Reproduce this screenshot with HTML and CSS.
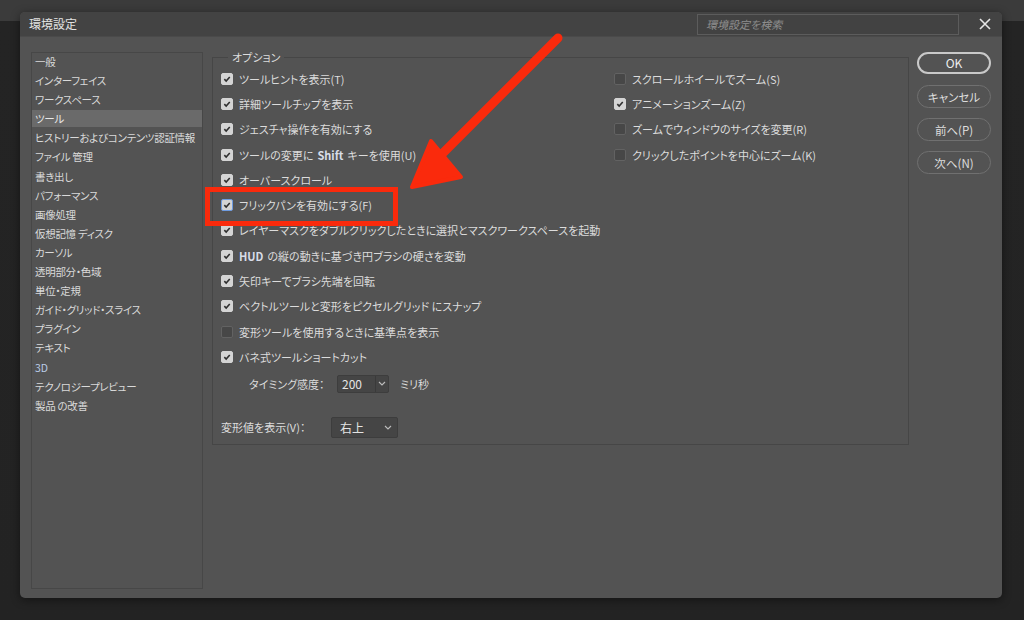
FILE: index.html
```html
<!DOCTYPE html>
<html lang="ja">
<head>
<meta charset="utf-8">
<title>環境設定</title>
<link rel="stylesheet" href="styles.css">
</head>
<body>
<div class="dialog">
  <div class="titlebar">
    <span class="title">環境設定</span>
    <div class="search">環境設定を検索</div>
    <svg class="close" width="12" height="12" viewBox="0 0 12 12"><path d="M1 1 L11 11 M11 1 L1 11" stroke="#e6e6e6" stroke-width="1.6" fill="none"/></svg>
  </div>
  <div class="dbody">
    <ul class="sidebar">
      <li>一般</li>
      <li>インターフェイス</li>
      <li>ワークスペース</li>
      <li class="sel">ツール</li>
      <li>ヒストリーおよびコンテンツ認証情報</li>
      <li>ファイル 管理</li>
      <li>書き出し</li>
      <li>パフォーマンス</li>
      <li>画像処理</li>
      <li>仮想記憶 ディスク</li>
      <li>カーソル</li>
      <li>透明部分・色域</li>
      <li>単位・定規</li>
      <li>ガイド・グリッド・スライス</li>
      <li>プラグイン</li>
      <li>テキスト</li>
      <li class="latin">3D</li>
      <li>テクノロジープレビュー</li>
      <li>製品 の改善</li>
    </ul>
    <div class="main">
      <fieldset class="group">
        <legend>オプション</legend>
        <div class="cols">
          <div class="col-left">
            <div class="opt"><span class="cb on"><svg viewBox="0 0 12 12"><path d="M2.8 6.2 L5 8.4 L9.3 3.7"/></svg></span>ツールヒントを表示(T)</div>
            <div class="opt"><span class="cb on"><svg viewBox="0 0 12 12"><path d="M2.8 6.2 L5 8.4 L9.3 3.7"/></svg></span>詳細ツールチップを表示</div>
            <div class="opt"><span class="cb on"><svg viewBox="0 0 12 12"><path d="M2.8 6.2 L5 8.4 L9.3 3.7"/></svg></span>ジェスチャ操作を有効にする</div>
            <div class="opt"><span class="cb on"><svg viewBox="0 0 12 12"><path d="M2.8 6.2 L5 8.4 L9.3 3.7"/></svg></span>ツールの変更に<span class="lat">Shift</span>キーを使用(U)</div>
            <div class="opt"><span class="cb on"><svg viewBox="0 0 12 12"><path d="M2.8 6.2 L5 8.4 L9.3 3.7"/></svg></span>オーバースクロール</div>
            <div class="opt"><span class="cb on focus"><svg viewBox="0 0 12 12"><path d="M2.8 6.2 L5 8.4 L9.3 3.7"/></svg></span>フリックパンを有効にする(F)</div>
            <div class="opt"><span class="cb on"><svg viewBox="0 0 12 12"><path d="M2.8 6.2 L5 8.4 L9.3 3.7"/></svg></span>レイヤーマスクをダブルクリックしたときに選択とマスクワークスペースを起動</div>
            <div class="opt"><span class="cb on"><svg viewBox="0 0 12 12"><path d="M2.8 6.2 L5 8.4 L9.3 3.7"/></svg></span><span class="lat first">HUD</span>の縦の動きに基づき円ブラシの硬さを変動</div>
            <div class="opt"><span class="cb on"><svg viewBox="0 0 12 12"><path d="M2.8 6.2 L5 8.4 L9.3 3.7"/></svg></span>矢印キーでブラシ先端を回転</div>
            <div class="opt"><span class="cb on"><svg viewBox="0 0 12 12"><path d="M2.8 6.2 L5 8.4 L9.3 3.7"/></svg></span>ベクトルツールと変形をピクセルグリッド にスナップ</div>
            <div class="opt"><span class="cb"></span>変形ツールを使用するときに基準点を表示</div>
            <div class="opt"><span class="cb on"><svg viewBox="0 0 12 12"><path d="M2.8 6.2 L5 8.4 L9.3 3.7"/></svg></span>バネ式ツールショートカット</div>
            <div class="timing">
              <span class="tlabel">タイミング感度：</span>
              <div class="select small">
                <span class="val">200</span>
                <span class="drop"><svg width="8" height="5" viewBox="0 0 8 5"><path d="M1 1 L4 4 L7 1" stroke="#bdbdbd" stroke-width="1.1" fill="none"/></svg></span>
              </div>
              <span class="unit">ミリ秒</span>
            </div>
          </div>
          <div class="col-right">
            <div class="opt"><span class="cb"></span>スクロールホイールでズーム(S)</div>
            <div class="opt"><span class="cb on"><svg viewBox="0 0 12 12"><path d="M2.8 6.2 L5 8.4 L9.3 3.7"/></svg></span>アニメーションズーム(Z)</div>
            <div class="opt"><span class="cb"></span>ズームでウィンドウのサイズを変更(R)</div>
            <div class="opt"><span class="cb"></span>クリックしたポイントを中心にズーム(K)</div>
          </div>
        </div>
        <div class="xform">
          <span class="xlabel">変形値を表示(V)：</span>
          <div class="select wide">
            <span class="val">右上</span>
            <svg width="8" height="5" viewBox="0 0 8 5"><path d="M1 1 L4 4 L7 1" stroke="#bdbdbd" stroke-width="1.1" fill="none"/></svg>
          </div>
        </div>
      </fieldset>
    </div>
    <div class="buttons">
      <button class="btn primary">OK</button>
      <button class="btn">キャンセル</button>
      <button class="btn">前へ(P)</button>
      <button class="btn">次へ(N)</button>
    </div>
  </div>
</div>
<svg class="annot" width="1024" height="620" viewBox="0 0 1024 620">
  <line x1="558" y1="38" x2="442" y2="154" stroke="#fa2a0c" stroke-width="9" stroke-linecap="round"/>
  <polygon points="431,141 461,177 412,187" fill="#fa2a0c" stroke="#fa2a0c" stroke-width="4" stroke-linejoin="round"/>
  <rect x="207.5" y="189.5" width="188" height="34" fill="none" stroke="#fa2a0c" stroke-width="5"/>
</svg>
</body>
</html>
```
FILE: styles.css
```css
* { box-sizing: border-box; }
html, body { margin: 0; padding: 0; }
body {
  width: 1024px;
  height: 620px;
  overflow: hidden;
  background: linear-gradient(#3b3b3b 0, #3b3b3b 21px, #242424 21px, #232323 100%);
  font-family: "Noto Sans CJK JP", "Noto Sans", sans-serif;
  font-size: 11px;
  font-feature-settings: "palt";
  color: #dcdcdc;
  position: relative;
  padding-top: 12px;
  padding-left: 20px;
}
.dialog {
  width: 982px;
  height: 586px;
  background: #535353;
  border-radius: 5px;
  box-shadow: 0 2px 10px rgba(0,0,0,0.45);
  overflow: hidden;
  display: flex;
  flex-direction: column;
}
.titlebar {
  height: 25px;
  background: #434343;
  border-bottom: 1px solid #4a4a4a;
  display: flex;
  align-items: center;
  padding-left: 9px;
  padding-right: 11px;
  flex: none;
}
.title {
  font-size: 12px;
  color: #e2e2e2;
  line-height: 14px;
}
.search {
  margin-left: auto;
  width: 262px;
  height: 21px;
  border: 1px solid #5c5c5c;
  background: #424242;
  color: #8e8e8e;
  font-style: italic;
  font-size: 11px;
  line-height: 19px;
  padding-left: 8px;
}
.close { margin-left: 20px; flex: none; }
.dbody {
  flex: 1;
  display: flex;
  padding: 13px 11px 9px 11px;
}
.sidebar {
  list-style: none;
  margin: 2px 0 0 0;
  padding: 0;
  width: 172px;
  border: 1px solid #474747;
  flex: none;
  display: flex;
  flex-direction: column;
  gap: 2px;
  font-size: 10.5px;
  letter-spacing: -0.3px;
}
.sidebar li {
  height: 17.1px;
  line-height: 17px;
  padding-left: 3px;
  white-space: nowrap;
  color: #dadada;
}
.sidebar li.sel { background: #6a6a6a; color: #e8e8e8; }
.sidebar li.latin { color: #b9cbe6; letter-spacing: 0; }
.main {
  width: 697px;
  margin-left: 9px;
  flex: none;
}
.group {
  margin: 0;
  padding: 2px 8px 4px 8px;
  border: 1px solid #464646;
  min-width: 0;
  height: 395px;
}
.group legend {
  padding: 0 4px;
  margin-left: 7px;
  line-height: 14px;
  color: #dcdcdc;
}
.cols { display: flex; }
.col-left { width: 393px; flex: none; }
.col-right { flex: 1; }
.opt {
  height: 25.3px;
  display: flex;
  align-items: center;
  white-space: nowrap;
  color: #dcdcdc;
}
.lat { font-weight: 600; color: #d8dde8; margin: 0 4px; }
.lat.first { margin-left: 0; }
.cb {
  width: 12px;
  height: 12px;
  border-radius: 2px;
  background: #474747;
  border: 1px solid #626262;
  margin-right: 6px;
  flex: none;
  display: flex;
}
.cb.on {
  background: #d4d4d4;
  border-color: #d4d4d4;
}
.cb.on.focus { border-color: #6e9be0; }
.cb svg { width: 10px; height: 10px; }
.cb svg path { stroke: #2f2f2f; stroke-width: 1.9; fill: none; }
.timing {
  height: 28px;
  display: flex;
  align-items: center;
  padding-left: 28px;
}
.tlabel { width: 88px; white-space: nowrap; }
.select {
  display: flex;
  align-items: center;
  background: #454545;
  border: 1px solid #3d3d3d;
  border-radius: 2px;
  color: #e4e4e4;
  font-size: 12px;
}
.select.small { width: 52px; height: 18px; }
.select.small .val { width: 37px; padding-left: 4px; line-height: 16px; }
.select.small .drop {
  flex: 1;
  height: 100%;
  border-left: 1px solid #3a3a3a;
  display: flex;
  align-items: center;
  justify-content: center;
}
.unit { margin-left: 11px; }
.xform {
  margin-top: 17px;
  height: 25px;
  display: flex;
  align-items: center;
}
.xlabel { width: 110px; white-space: nowrap; }
.select.wide {
  width: 67px;
  height: 21px;
  padding: 0 5px 0 8px;
  justify-content: space-between;
}
.buttons {
  margin-left: 8px;
  width: 74px;
  flex: none;
  display: flex;
  flex-direction: column;
  gap: 10px;
  padding-top: 2px;
}
.btn {
  height: 23px;
  border-radius: 12px;
  background: transparent;
  border: 1px solid #707070;
  color: #dedede;
  font-family: inherit;
  font-size: 11.5px;
  font-feature-settings: "palt";
  padding: 0;
  line-height: 20px;
}
.btn.primary { border: 2px solid #c9c9c9; color: #eeeeee; line-height: 18px; height: 22px; margin-bottom: 1px; font-size: 12px; }
.annot {
  position: absolute;
  left: 0;
  top: 0;
  pointer-events: none;
}
```
